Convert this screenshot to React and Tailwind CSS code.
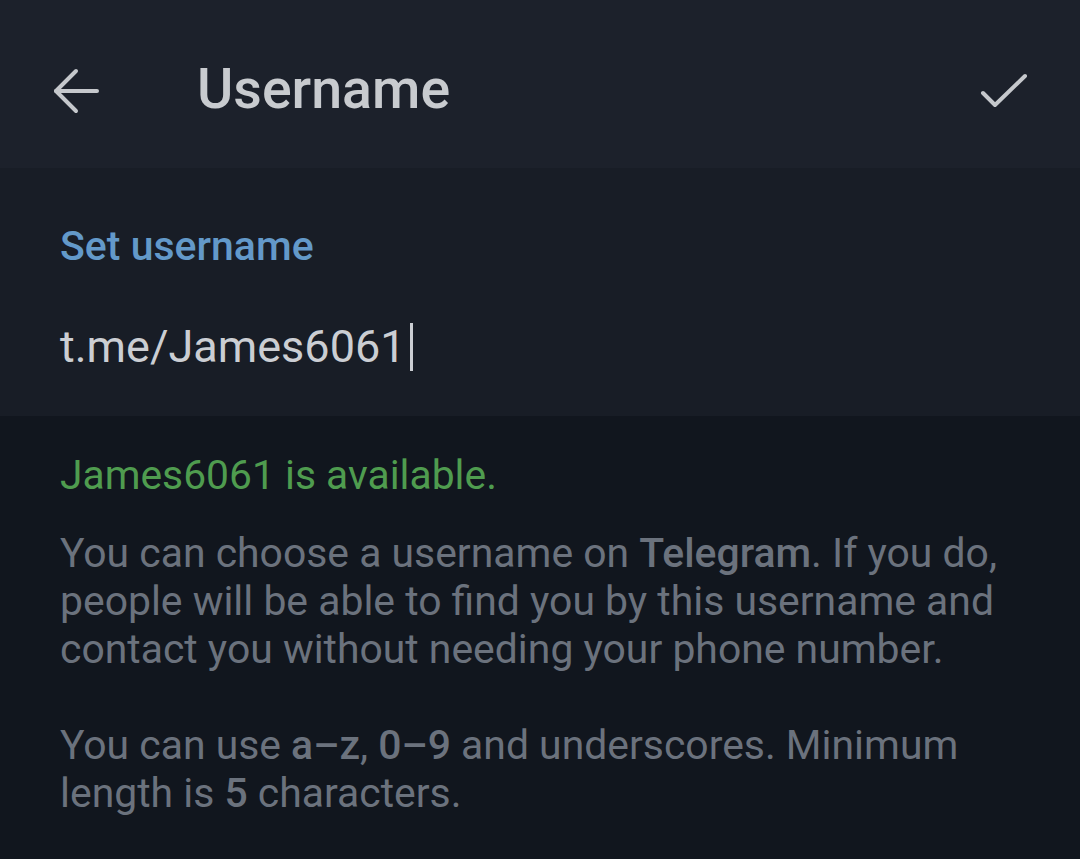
import React from 'react';

function BackArrow() {
  return (
    <svg width="48" height="48" viewBox="0 0 48 48" fill="none" stroke="#c5c8cc" strokeWidth="4" strokeLinecap="round" strokeLinejoin="round">
      <path d="M45 25H4" />
      <path d="M24 5L4 25l20 20" />
    </svg>
  );
}

function CheckMark() {
  return (
    <svg width="48" height="48" viewBox="0 0 48 48" fill="none" stroke="#c5c8cc" strokeWidth="4" strokeLinecap="round" strokeLinejoin="round">
      <path d="M3 27l12 12L45 10" />
    </svg>
  );
}

export default function App() {
  return (
    <div className="min-h-[859px] w-full bg-[#11161e] font-['Roboto',sans-serif]">
      <div className="flex h-[168px] items-center bg-[#1c212b] pt-[12px]">
        <div className="ml-[52px]">
          <BackArrow />
        </div>
        <h1 className="ml-[97px] text-[55.5px] leading-[60px] font-medium text-[#c8cbcf]">Username</h1>
        <div className="ml-auto mr-[52px]">
          <CheckMark />
        </div>
      </div>

      <div className="bg-[#181d26] px-[60px] pt-[54px] pb-[43px]">
        <p className="text-[41px] leading-[48px] font-medium text-[#6399c9]">Set username</p>
        <div className="mt-[51px] flex items-center">
          <span className="text-[45px] leading-[52px] text-[#cbced3]">t.me/James6061</span>
          <span className="ml-[4px] inline-block h-[48px] w-[3px] bg-[#cbced3]" />
        </div>
      </div>

      <div className="px-[60px] pt-[35px]">
        <p className="text-[40.8px] leading-[48px] text-[#4f9c4f]">James6061 is available.</p>
        <p className="mt-[30px] whitespace-nowrap text-[40.9px] leading-[48px] text-[#6b727d]">
          You can choose a username on <span className="font-medium">Telegram</span>. If you do,
          <br />
          people will be able to find you by this username and
          <br />
          contact you without needing your phone number.
          <br />
          <br />
          You can use <span className="font-medium">a–z</span>, <span className="font-medium">0–9</span> and underscores. Minimum
          <br />
          length is <span className="font-medium">5</span> characters.
        </p>
      </div>
    </div>
  );
}
